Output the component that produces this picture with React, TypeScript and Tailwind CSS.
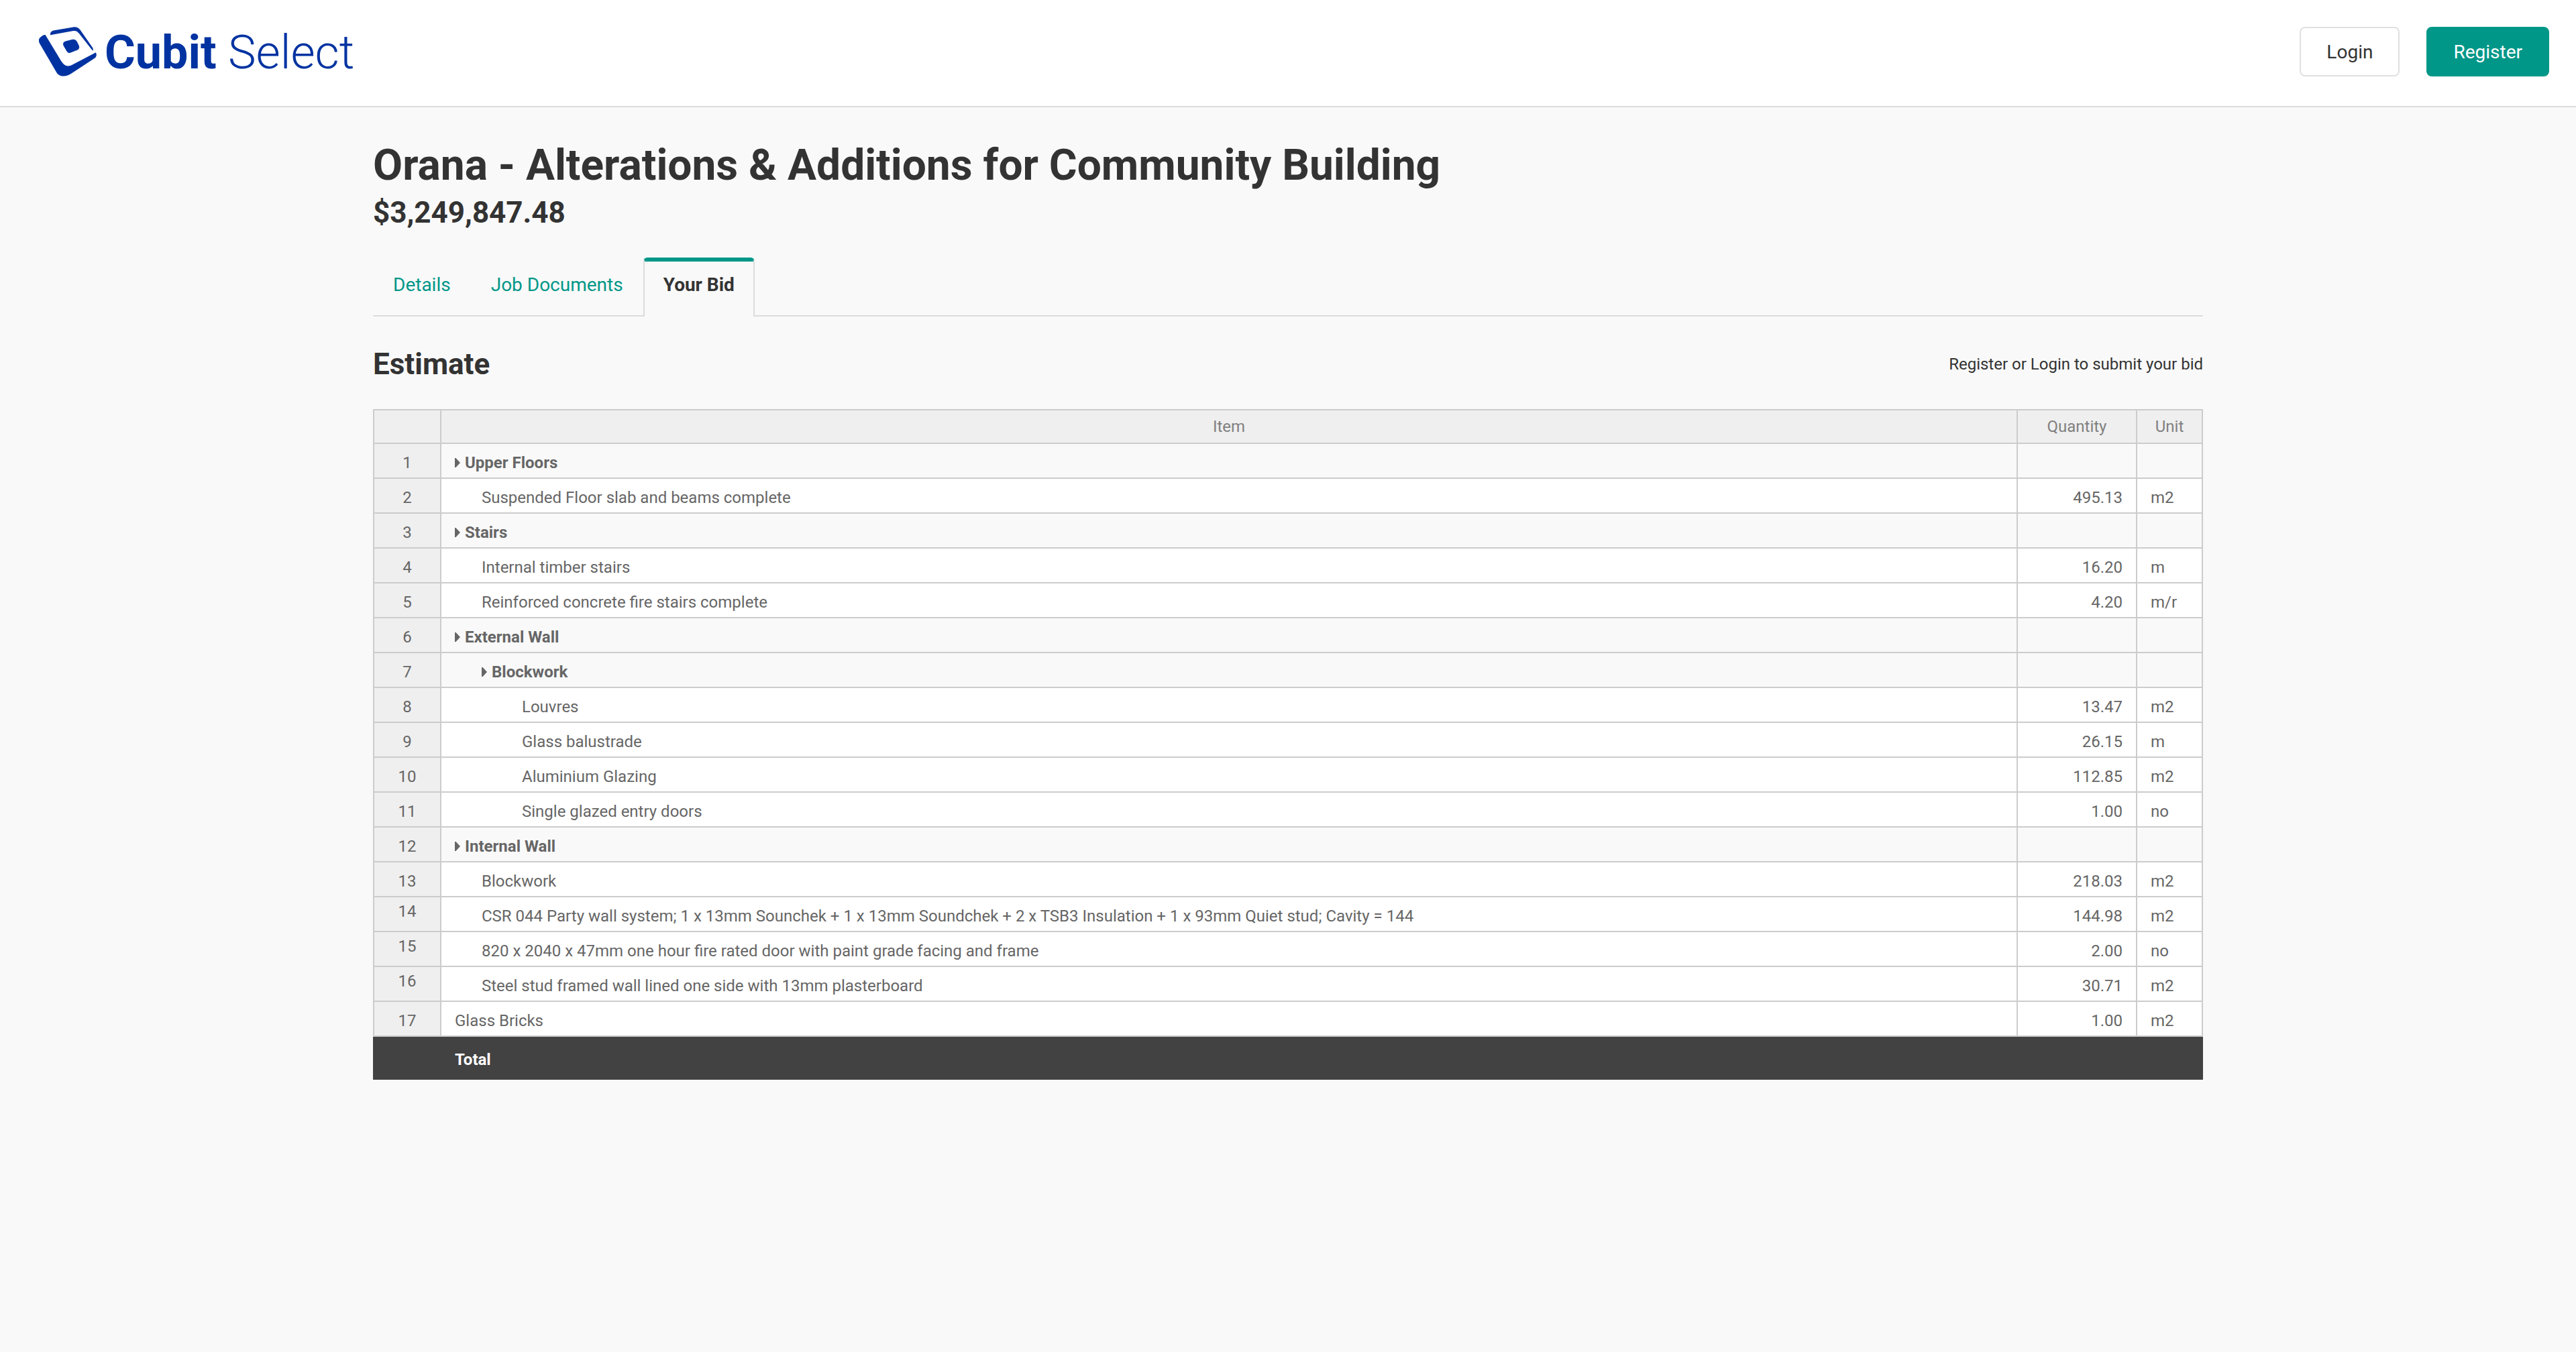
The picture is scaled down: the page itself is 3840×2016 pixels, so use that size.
import React from "react";

type Row = {
  item: string;
  level: 0 | 1 | 2;
  group?: boolean;
  top?: boolean;
  quantity?: string;
  unit?: string;
};

const rows: Row[] = [
  { item: "Upper Floors", level: 0, group: true },
  { item: "Suspended Floor slab and beams complete", level: 1, quantity: "495.13", unit: "m2" },
  { item: "Stairs", level: 0, group: true },
  { item: "Internal timber stairs", level: 1, quantity: "16.20", unit: "m" },
  { item: "Reinforced concrete fire stairs complete", level: 1, quantity: "4.20", unit: "m/r" },
  { item: "External Wall", level: 0, group: true },
  { item: "Blockwork", level: 1, group: true },
  { item: "Louvres", level: 2, quantity: "13.47", unit: "m2" },
  { item: "Glass balustrade", level: 2, quantity: "26.15", unit: "m" },
  { item: "Aluminium Glazing", level: 2, quantity: "112.85", unit: "m2" },
  { item: "Single glazed entry doors", level: 2, quantity: "1.00", unit: "no" },
  { item: "Internal Wall", level: 0, group: true },
  { item: "Blockwork", level: 1, quantity: "218.03", unit: "m2" },
  {
    item: "CSR 044 Party wall system; 1 x 13mm Sounchek + 1 x 13mm Soundchek + 2 x TSB3 Insulation + 1 x 93mm Quiet stud; Cavity = 144",
    level: 1,
    top: true,
    quantity: "144.98",
    unit: "m2",
  },
  { item: "820 x 2040 x 47mm one hour fire rated door with paint grade facing and frame", level: 1, top: true, quantity: "2.00", unit: "no" },
  { item: "Steel stud framed wall lined one side with 13mm plasterboard", level: 1, top: true, quantity: "30.71", unit: "m2" },
  { item: "Glass Bricks", level: 0, quantity: "1.00", unit: "m2" },
];

const indent = ["pl-5", "pl-[60px]", "pl-[120px]"];

function Logo() {
  return (
    <a href="#" aria-label="Cubit Select" className="flex items-center gap-2.5 text-[#0033a1]">
      <svg viewBox="0 0 88 76" className="h-[76px] w-[88px]" fill="currentColor" aria-hidden="true">
        <path d="M.6 24C-.8 19.500 0 17 3.500 14.500L5.500 13Q8 11.600 9.600 12L33.500 51.500C38 58.500 43 60 49.500 56.800L84.800 38.300C86.500 41 86 44.500 83.500 46.500L48.500 69.500C40 75.500 30 75 26 67.500Z" />
        <path d="M17 12.200C16.500 8 19 6 23 5.200L51 .4C56.500-.3 59 1.500 61.500 4.500L80 31Q81.500 33.500 80.200 35.800L60 10C57.500 6.800 55 5.200 50 6.200Z" />
        <path d="M39.500 21.500L50 18.800C53 18.200 55 19.200 56.500 21.500L59.500 27.500C61 31 60 33 57.500 34.500L48 38.300C45 39.500 43 38.800 41.500 36.500L36.800 28.500C35.200 25 36.500 22.300 39.500 21.500Z" />
      </svg>
      <span className="text-[70px] leading-[76px] whitespace-nowrap">
        <span className="font-bold">Cubit</span> <span className="font-light">Select</span>
      </span>
    </a>
  );
}

export default function App() {
  return (
    <div className="min-h-screen bg-[#f9f9f9] font-['Roboto',sans-serif] text-[#333]">
      <header className="flex items-start justify-between border-b-2 border-[#dcdcdc] bg-white pt-10 pr-10 pb-[42px] pl-[58px]">
        <Logo />
        <div className="flex gap-10 text-[28px] leading-[34px]">
          <button type="button" className="rounded-lg border-2 border-[#e0e0e0] bg-white px-[38px] pt-[19px] pb-[17px]">Login</button>
          <button type="button" className="rounded-lg border-2 border-[#009788] bg-[#009788] px-[38px] pt-[19px] pb-[17px] text-white">Register</button>
        </div>
      </header>

      <main className="mx-auto w-full max-w-[2728px] pt-[50px]">
        <h1 className="text-[64px] leading-[74px] font-bold">Orana - Alterations &amp; Additions for Community Building</h1>
        <p className="text-[44px] leading-[66px] font-bold">$3,249,847.48</p>

        <nav className="mt-[34px] flex border-b-2 border-[#dcdcdc] text-[28px] leading-[34px]">
          <a href="#details" className="px-[30px] pt-6 pb-7 text-[#009788]">Details</a>
          <a href="#documents" className="px-[30px] pt-6 pb-7 text-[#009788]">Job Documents</a>
          <a
            href="#bid"
            aria-current="page"
            className="-mb-0.5 rounded-t-md border-x-2 border-t-[6px] border-x-[#dcdcdc] border-t-[#009788] bg-[#f9f9f9] px-7 pt-[18px] pb-[30px] font-bold"
          >
            Your Bid
          </a>
        </nav>

        <div className="flex items-center justify-between pt-[42px] pb-[38px]">
          <h2 className="text-[44px] leading-[58px] font-bold">Estimate</h2>
          <p className="text-[24px] leading-[30px]">Register or Login to submit your bid</p>
        </div>

        <table className="w-full border-separate border-spacing-0 text-[24px] leading-[30px] text-[#666]">
          <thead>
            <tr className="h-[52px] bg-[#efefef] text-[#808080]">
              <th scope="col" aria-label="Row" className="w-[102px] border-2 border-[#cccccc]" />
              <th scope="col" className="border-y-2 border-r-2 border-[#cccccc] font-normal">Item</th>
              <th scope="col" className="w-[178px] border-y-2 border-r-2 border-[#cccccc] font-normal">Quantity</th>
              <th scope="col" className="w-[98px] border-y-2 border-r-2 border-[#cccccc] font-normal">Unit</th>
            </tr>
          </thead>
          <tbody>
            {rows.map((row, i) => (
              <tr key={i} className={row.group ? "h-[52px] bg-[#f9f9f9]" : "h-[52px] bg-white"}>
                <th
                  scope="row"
                  className={`border-x-2 border-b-2 border-[#cccccc] bg-[#efefef] pt-1.5 font-normal ${row.top ? "align-top" : ""}`}
                >
                  {i + 1}
                </th>
                <td className={`border-r-2 border-b-2 border-[#cccccc] pt-1.5 ${indent[row.level]} ${row.group ? "font-bold" : ""}`}>
                  {row.group ? (
                    <span className="flex items-center gap-[7px]">
                      <svg viewBox="0 0 8 14" className="h-3.5 w-2" fill="currentColor" aria-hidden="true">
                        <path d="M0 0h1.500L8 7 1.500 14H0Z" />
                      </svg>
                      {row.item}
                    </span>
                  ) : (
                    row.item
                  )}
                </td>
                <td className="border-r-2 border-b-2 border-[#cccccc] pt-1.5 pr-5 text-right">{row.quantity}</td>
                <td className="border-r-2 border-b-2 border-[#cccccc] pt-1.5 pl-5">{row.unit}</td>
              </tr>
            ))}
          </tbody>
          <tfoot>
            <tr className="h-16 bg-[#424242] text-white">
              <td />
              <th scope="row" colSpan={3} className="pt-1 pl-5 text-left font-bold">Total</th>
            </tr>
          </tfoot>
        </table>
      </main>
    </div>
  );
}
